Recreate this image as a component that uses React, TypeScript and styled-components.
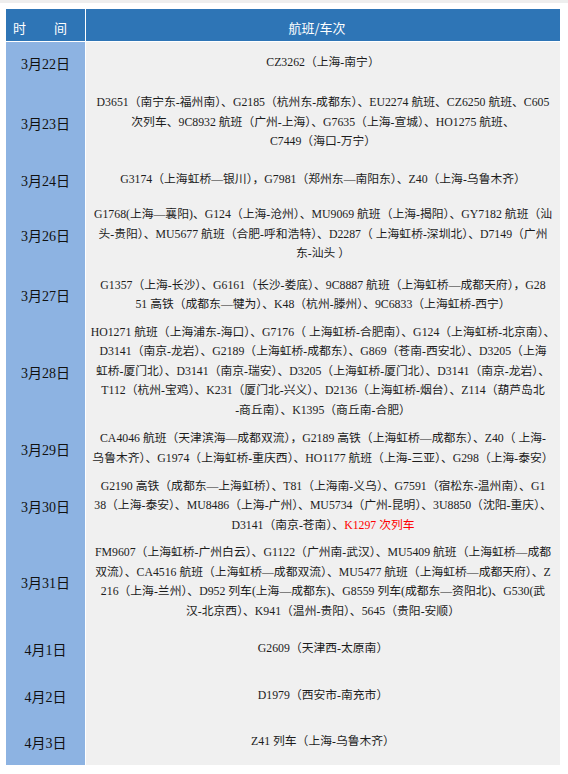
import React from 'react'
import styled, { createGlobalStyle } from 'styled-components'

type Line = string | { text: string; red: string }
type Trip = { date: string; h: number; lines: Line[] }

const trips: Trip[] = [
  { date: '3月22日', h: 42, lines: ['CZ3262（上海-南宁）'] },
  {
    date: '3月23日',
    h: 77,
    lines: [
      'D3651（南宁东-福州南）、G2185（杭州东-成都东）、EU2274 航班、CZ6250 航班、C605',
      '次列车、9C8932 航班（广州-上海）、G7635（上海-宣城）、HO1275 航班、',
      'C7449（海口-万宁）',
    ],
  },
  {
    date: '3月24日',
    h: 37,
    lines: ['G3174（上海虹桥—银川），G7981（郑州东—南阳东）、Z40（上海-乌鲁木齐）'],
  },
  {
    date: '3月26日',
    h: 73,
    lines: [
      'G1768(上海—襄阳)、G124（上海-沧州）、MU9069 航班（上海-揭阳）、GY7182 航班（汕',
      '头-贵阳）、MU5677 航班（合肥-呼和浩特）、D2287（ 上海虹桥-深圳北）、D7149（广州',
      '东-汕头 ）',
    ],
  },
  {
    date: '3月27日',
    h: 48,
    lines: [
      'G1357（上海-长沙）、G6161（长沙-娄底）、9C8887 航班（上海虹桥—成都天府），G28',
      '51 高铁（成都东—犍为）、K48（杭州-滕州）、9C6833（上海虹桥-西宁）',
    ],
  },
  {
    date: '3月28日',
    h: 105,
    lines: [
      'HO1271 航班（上海浦东-海口）、G7176（ 上海虹桥-合肥南）、G124（上海虹桥-北京南）、',
      'D3141（南京-龙岩）、G2189（上海虹桥-成都东）、G869（苍南-西安北）、D3205（上海',
      '虹桥-厦门北）、D3141（南京-瑞安）、D3205（上海虹桥-厦门北）、D3141（南京-龙岩）、',
      'T112（杭州-宝鸡）、K231（厦门北-兴义）、D2136（上海虹桥-烟台）、Z114（葫芦岛北',
      '-商丘南）、K1395（商丘南-合肥）',
    ],
  },
  {
    date: '3月29日',
    h: 49,
    lines: [
      'CA4046 航班（天津滨海—成都双流），G2189 高铁（上海虹桥—成都东）、Z40（ 上海-',
      '乌鲁木齐）、G1974（上海虹桥-重庆西）、HO1177 航班（上海-三亚）、G298（上海-泰安）',
    ],
  },
  {
    date: '3月30日',
    h: 66,
    lines: [
      'G2190 高铁（成都东—上海虹桥）、T81（上海南-义乌）、G7591（宿松东-温州南）、G1',
      '38（上海-泰安）、MU8486（上海-广州）、MU5734（广州-昆明）、3U8850（沈阳-重庆）、',
      { text: 'D3141（南京-苍南）、', red: 'K1297 次列车' },
    ],
  },
  {
    date: '3月31日',
    h: 86,
    lines: [
      'FM9607（上海虹桥-广州白云）、G1122（广州南-武汉）、MU5409 航班（上海虹桥—成都',
      '双流）、CA4516 航班（上海虹桥—成都双流）、MU5477 航班（上海虹桥—成都天府）、Z',
      '216（上海-兰州）、D952 列车(上海—成都东)、G8559 列车(成都东—资阳北)、G530(武',
      '汉-北京西）、K941（温州-贵阳）、5645（贵阳-安顺）',
    ],
  },
  { date: '4月1日', h: 47, lines: ['G2609（天津西-太原南）'] },
  { date: '4月2日', h: 47, lines: ['D1979（西安市-南充市）'] },
  { date: '4月3日', h: 46, lines: ['Z41 列车（上海-乌鲁木齐）'] },
]

const GlobalStyle = createGlobalStyle`
  body {
    margin: 0;
    background: #fff;
    font-family: "Liberation Serif", "Noto Sans CJK SC", serif;
  }
`

const Page = styled.div`
  width: 568px;
  border-top: 3px solid #eeeeee;
  padding: 6px 8px 0 6px;
  box-sizing: border-box;
`

const Table = styled.div`
  display: flex;
  flex-direction: column;
  width: 554px;
`

const HeadRow = styled.div`
  display: grid;
  grid-template-columns: 79px 1fr;
  column-gap: 1px;
  height: 32px;
  margin-bottom: 1px;
`

const HeadCell = styled.div<{ $left?: boolean }>`
  display: flex;
  align-items: flex-end;
  justify-content: ${(p) => (p.$left ? 'flex-start' : 'center')};
  gap: 28px;
  padding: 0 0 4px ${(p) => (p.$left ? '7px' : '0')};
  padding-right: ${(p) => (p.$left ? '0' : '12px')};
  background: #2e75b6;
  color: #fff;
  font-family: "Noto Sans CJK SC", sans-serif;
  font-size: 13px;
  line-height: 18px;
`

const Row = styled.div<{ $h: number }>`
  display: grid;
  grid-template-columns: 79px 1fr;
  column-gap: 1px;
  height: ${(p) => p.$h}px;
`

const DateCell = styled.div`
  display: flex;
  align-items: center;
  justify-content: center;
  background: #8db3e2;
  color: #111;
  font-size: 14px;
  font-weight: 400;
`

const InfoCell = styled.div`
  display: flex;
  flex-direction: column;
  align-items: center;
  justify-content: center;
  background: #f0f0f0;
  color: #1c1c1c;
  font-size: 11.8px;
  line-height: 19.5px;
`

const InfoLine = styled.div`
  white-space: nowrap;
`

const Red = styled.span`
  color: #ff0000;
`

export default function App() {
  return (
    <>
      <GlobalStyle />
      <Page>
        <Table>
          <HeadRow>
            <HeadCell $left>
              <span>时</span>
              <span>间</span>
            </HeadCell>
            <HeadCell>航班/车次</HeadCell>
          </HeadRow>
          {trips.map((t) => (
            <Row key={t.date} $h={t.h}>
              <DateCell>{t.date}</DateCell>
              <InfoCell>
                {t.lines.map((l, i) =>
                  typeof l === 'string' ? (
                    <InfoLine key={i}>{l}</InfoLine>
                  ) : (
                    <InfoLine key={i}>
                      {l.text}
                      <Red>{l.red}</Red>
                    </InfoLine>
                  ),
                )}
              </InfoCell>
            </Row>
          ))}
        </Table>
      </Page>
    </>
  )
}
